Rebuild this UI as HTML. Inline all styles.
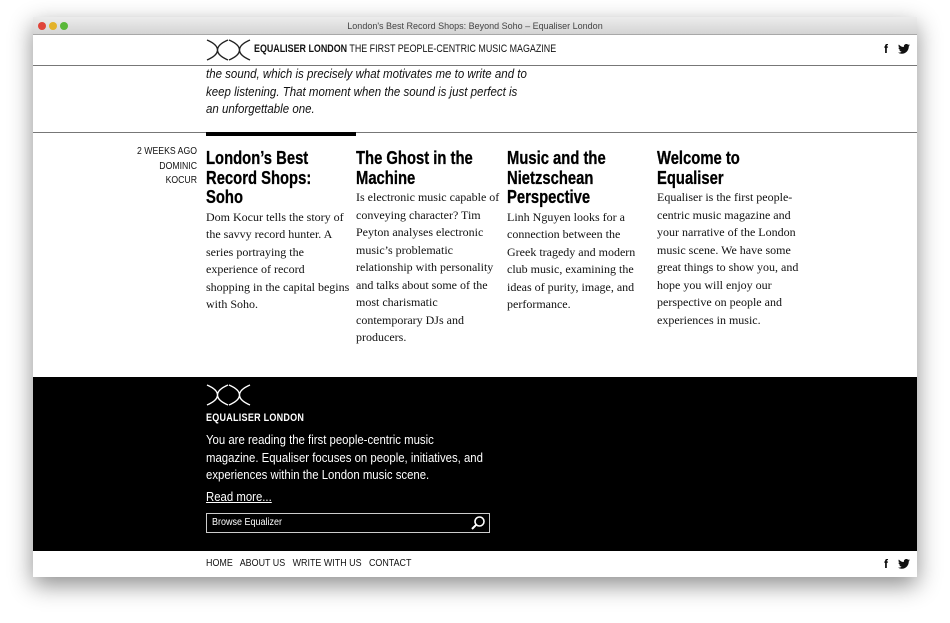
<!DOCTYPE html>
<html><head><meta charset="utf-8"><style>
*{margin:0;padding:0;box-sizing:border-box}
body{width:950px;height:623px;background:#fff;position:relative;overflow:hidden;font-family:"Liberation Sans",sans-serif}
.win{position:absolute;left:33px;top:17px;width:884px;height:560px;background:#fff;box-shadow:0 8px 22px rgba(0,0,0,.45);overflow:hidden}
.tb{height:18px;background:linear-gradient(#ececec,#d4d4d4);border-bottom:1px solid #a8a8a8;text-align:center;font:9px "Liberation Sans",sans-serif;color:#444;line-height:18px}
.dot{position:absolute;top:5px;width:8px;height:8px;border-radius:50%}
.a{position:absolute;white-space:nowrap}
.sx{transform-origin:0 0}
.ser{font-family:"Liberation Serif",serif;font-size:12px;line-height:17.5px;color:#111;white-space:nowrap}
h2{font-weight:bold;font-size:18.5px;line-height:19.5px;color:#000;margin-bottom:2px;transform:scaleX(.8);transform-origin:0 0;white-space:nowrap;-webkit-text-stroke:.3px #000}
.col{position:absolute;top:131px;width:145px}
</style></head><body>
<div class="win">
<div class="tb">London's Best Record Shops: Beyond Soho – Equaliser London</div>
<div class="dot" style="left:5px;background:#e0443a"></div><div class="dot" style="left:16px;background:#e3b22a"></div><div class="dot" style="left:27px;background:#5ab839"></div>
<svg class="a" style="left:173px;top:22px" width="45" height="22" viewBox="0 0 45 22"><path d="M1 1C15 7 15 15 1 21M22 1C8 7 8 15 22 21M23 1C37 7 37 15 23 21M44 1C30 7 30 15 44 21" stroke="#222" fill="none" stroke-width="1.4"/></svg>
<div class="a sx" style="left:221px;top:26px;font-size:11px;color:#111;transform:scaleX(.81)"><b>EQUALISER LONDON</b> THE FIRST PEOPLE-CENTRIC MUSIC MAGAZINE</div>
<div class="a" style="left:851px;top:25px;font:bold 12px 'Liberation Sans',sans-serif">f</div>
<svg class="a" style="left:865px;top:27px" width="12" height="10" viewBox="0 0 24 20"><path d="M24 2.4a10 10 0 0 1-2.8.8A5 5 0 0 0 23.3.4a10 10 0 0 1-3.1 1.2A4.9 4.9 0 0 0 11.8 6 14 14 0 0 1 1.7.9a4.9 4.9 0 0 0 1.5 6.6A5 5 0 0 1 1 6.9a4.9 4.9 0 0 0 3.9 4.8 5 5 0 0 1-2.2.1 4.9 4.9 0 0 0 4.6 3.4A9.9 9.9 0 0 1 0 17.3 14 14 0 0 0 7.5 19.5c9 0 14-7.5 14-14v-.6A10 10 0 0 0 24 2.4z" fill="#111"/></svg>
<div class="a" style="left:0;top:48px;width:884px;height:1px;background:#777"></div>
<div class="a sx" style="left:173px;top:49px;font-size:12.5px;font-style:italic;line-height:17.7px;color:#111;transform:scaleX(.92)">the sound, which is precisely what motivates me to write and to<br>keep listening. That moment when the sound is just perfect is<br>an unforgettable one.</div>
<div class="a" style="left:0;top:115px;width:884px;height:1px;background:#777"></div>
<div class="a" style="left:173px;top:115px;width:150px;height:4px;background:#000"></div>
<div class="a" style="left:44px;top:128px;width:120px;text-align:right;font-size:10px;line-height:14.5px;color:#111;transform:scaleX(.87);transform-origin:100% 0">2 WEEKS AGO<br>DOMINIC<br>KOCUR</div>
<div class="col" style="left:173px"><h2>London’s Best<br>Record Shops:<br>Soho</h2><p class="ser">Dom Kocur tells the story of<br>the savvy record hunter. A<br>series portraying the<br>experience of record<br>shopping in the capital begins<br>with Soho.</p></div>
<div class="col" style="left:323px"><h2>The Ghost in the<br>Machine</h2><p class="ser">Is electronic music capable of<br>conveying character? Tim<br>Peyton analyses electronic<br>music’s problematic<br>relationship with personality<br>and talks about some of the<br>most charismatic<br>contemporary DJs and<br>producers.</p></div>
<div class="col" style="left:474px"><h2>Music and the<br>Nietzschean<br>Perspective</h2><p class="ser">Linh Nguyen looks for a<br>connection between the<br>Greek tragedy and modern<br>club music, examining the<br>ideas of purity, image, and<br>performance.</p></div>
<div class="col" style="left:624px"><h2>Welcome to<br>Equaliser</h2><p class="ser">Equaliser is the first people-<br>centric music magazine and<br>your narrative of the London<br>music scene. We have some<br>great things to show you, and<br>hope you will enjoy our<br>perspective on people and<br>experiences in music.</p></div>
<div class="a" style="left:0;top:360px;width:884px;height:174px;background:#000"></div>
<svg class="a" style="left:173px;top:367px" width="45" height="22" viewBox="0 0 45 22"><path d="M1 1C15 7 15 15 1 21M22 1C8 7 8 15 22 21M23 1C37 7 37 15 23 21M44 1C30 7 30 15 44 21" stroke="#fff" fill="none" stroke-width="1.4"/></svg>
<div class="a sx" style="left:173px;top:395px;font-size:11px;font-weight:bold;color:#fff;letter-spacing:.3px;transform:scaleX(.82)">EQUALISER LONDON</div>
<div class="a sx" style="left:173px;top:415px;font-size:12.5px;line-height:17.5px;color:#fff;transform:scaleX(.91)">You are reading the first people-centric music<br>magazine. Equaliser focuses on people, initiatives, and<br>experiences within the London music scene.</div>
<div class="a sx" style="left:173px;top:473px;font-size:12.5px;color:#fff;text-decoration:underline;transform:scaleX(.91)">Read more...</div>
<div class="a" style="left:173px;top:496px;width:284px;height:20px;border:1px solid #ccc"></div>
<div class="a sx" style="left:179px;top:500px;font-size:10px;color:#fff;transform:scaleX(.9)">Browse Equalizer</div>
<svg class="a" style="left:437px;top:498px" width="16" height="16" viewBox="0 0 16 16"><circle cx="9.5" cy="6.5" r="4.5" stroke="#fff" stroke-width="1.6" fill="none"/><path d="M6.3 9.7 2 14" stroke="#fff" stroke-width="2"/></svg>
<div class="a sx" style="left:173px;top:540px;font-size:10.5px;color:#111;transform:scaleX(.85)">HOME&nbsp;&nbsp; ABOUT US&nbsp;&nbsp; WRITE WITH US&nbsp;&nbsp; CONTACT</div>
<div class="a" style="left:851px;top:540px;font:bold 12px 'Liberation Sans',sans-serif">f</div>
<svg class="a" style="left:865px;top:542px" width="12" height="10" viewBox="0 0 24 20"><path d="M24 2.4a10 10 0 0 1-2.8.8A5 5 0 0 0 23.3.4a10 10 0 0 1-3.1 1.2A4.9 4.9 0 0 0 11.8 6 14 14 0 0 1 1.7.9a4.9 4.9 0 0 0 1.5 6.6A5 5 0 0 1 1 6.9a4.9 4.9 0 0 0 3.9 4.8 5 5 0 0 1-2.2.1 4.9 4.9 0 0 0 4.6 3.4A9.9 9.9 0 0 1 0 17.3 14 14 0 0 0 7.5 19.5c9 0 14-7.5 14-14v-.6A10 10 0 0 0 24 2.4z" fill="#111"/></svg>
</div>
</body></html>
